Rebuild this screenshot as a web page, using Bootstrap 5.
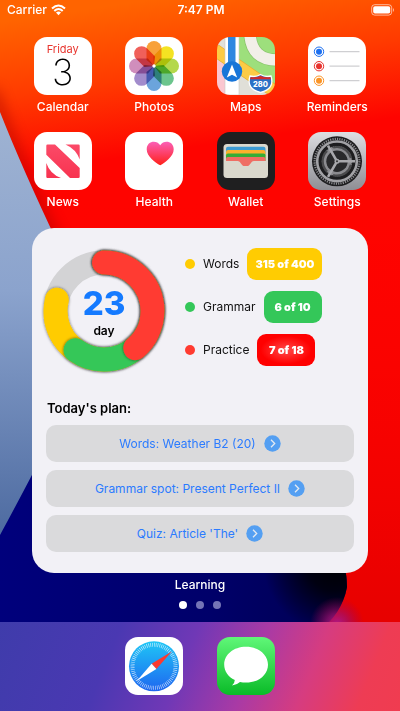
<!DOCTYPE html>
<html lang="en">
<head>
<meta charset="utf-8">
<meta name="viewport" content="width=device-width, initial-scale=1">
<title>Home screen</title>
<link href="https://cdn.jsdelivr.net/npm/bootstrap@5.3.0/dist/css/bootstrap.min.css" rel="stylesheet">
<style>
body{font-family:Inter,"Liberation Sans",sans-serif;background:#f00;color:#111}
.screen{min-height:100vh;isolation:isolate}
.wallpaper{inset:0;z-index:-1}
.status{height:20px;padding:0 5px 0 7px;font-size:12px;line-height:20px;font-weight:500}
.side{flex:1}
.apps{padding:17px 17px 0;row-gap:17px}
.app{gap:4px;color:#fff;font-size:12px;line-height:16px;font-weight:500}
.app:hover{color:#fff}
.tile{width:58px;height:58px;border-radius:13px;overflow:hidden}
.weekday{color:#e8352e;font-size:11px;line-height:14px;padding-top:5px;font-weight:400}
.daynum{font-size:36px;line-height:32px;font-weight:200;color:#000}
.petals path{mix-blend-mode:multiply}
.widget{margin:18px 32px 0;padding:18px 14px 21px;border-radius:22px;background:#f2f1f6}
.ring{width:132px;height:132px;margin:-1px 0 0 -8px}
.ring svg{overflow:visible}
.ring-text{inset:0}
.count{font-size:33px;line-height:39px;font-weight:800;color:#147aff}
.unit{font-size:12px;line-height:15px;font-weight:600;color:#000}
.legend{padding:2px 0 0 15px;gap:11px;font-size:12px}
.legend-row{gap:8px}
.dot{width:10px;height:10px;border-radius:50%}
.pill{min-width:58px;height:32px;line-height:32px;border-radius:9px;padding:0 8px;font-size:11px;font-weight:900;color:#fff}
.yellow{background:#ffcc02}.green{background:#34c759}.coral{background:#ff3b30}
.hot{background:radial-gradient(ellipse at center,#ff4a4a 0,#f00 62%)}
.plan-title{font-size:13px;line-height:18px;font-weight:600;color:#000;margin:22px 0 8px 1px}
.plan{gap:8px}
.plan-btn{--bs-btn-padding-y:0;height:37px;border:0;border-radius:10px;background:#dadadc;color:#2b7bff;font-size:12px;line-height:37px;font-weight:400;gap:8px}
.caption-line{font-size:12px;line-height:16px;font-weight:500;color:#fff;margin-top:4px}
.pager{gap:9px;margin-top:8px}
.page-dot{width:8px;height:8px;border:0;padding:0;border-radius:50%;background:#7474b6}
.page-dot.current{background:#fff}
.dock{min-height:89px;padding:15px 17px 0;background:linear-gradient(112deg,#3f3cab 0,#4a38b2 28%,#7038b6 46%,#a93aa5 62%,#d63c80 76%,#ee3c54 90%,#f03c50 100%)}
</style>
<script src="https://cdn.jsdelivr.net/npm/bootstrap@5.3.0/dist/js/bootstrap.bundle.min.js"></script>
</head>
<body>
<div class="screen d-flex flex-column position-relative">
<svg class="wallpaper position-absolute w-100 h-100" viewBox="0 0 400 711" preserveAspectRatio="none" aria-hidden="true">
<defs>
<linearGradient id="sun" gradientUnits="userSpaceOnUse" x1="150" y1="0" x2="172" y2="150"><stop offset="0" stop-color="#ff6400"/><stop offset=".5" stop-color="#ff3a00"/><stop offset="1" stop-color="#fe0400"/></linearGradient>
<linearGradient id="side" x1="0" y1="0" x2="0" y2="1"><stop offset=".25" stop-color="#f00" stop-opacity="0"/><stop offset="1" stop-color="#dc0000"/></linearGradient>
<linearGradient id="steel" x1="0" y1="0" x2="0" y2="1"><stop offset="0" stop-color="#9fb3d2"/><stop offset=".4" stop-color="#8ba3cd"/><stop offset="1" stop-color="#47659c"/></linearGradient>
<linearGradient id="navy" x1="0" y1="0" x2="1" y2="0"><stop offset="0" stop-color="#00007c"/><stop offset=".6" stop-color="#00006a"/><stop offset="1" stop-color="#000050"/></linearGradient>
<radialGradient id="ink" gradientUnits="userSpaceOnUse" cx="335" cy="562" r="72"><stop offset="0" stop-color="#000"/><stop offset=".4" stop-color="#000" stop-opacity=".8"/><stop offset="1" stop-color="#000" stop-opacity="0"/></radialGradient>
<radialGradient id="glow" gradientUnits="userSpaceOnUse" cx="337" cy="624" r="27"><stop offset="0" stop-color="#b01888"/><stop offset=".4" stop-color="#a01070" stop-opacity=".7"/><stop offset="1" stop-color="#a00050" stop-opacity="0"/></radialGradient>
<filter id="soft" x="-50%" y="-20%" width="200%" height="140%"><feGaussianBlur stdDeviation="7"/></filter>
</defs>
<rect width="400" height="711" fill="url(#sun)"/><rect width="400" height="711" fill="url(#side)"/>
<path d="M-8 90Q18 164 62 254" fill="none" stroke="#a00000" stroke-width="9" opacity=".6" filter="url(#soft)"/>
<path d="M0 112Q22 168 60 248V560H0Z" fill="url(#steel)"/>
<path d="M0 535Q18 502 45 450H300Q347 545 347 587Q342 614 318 632H0Z" fill="url(#navy)"/>
<path d="M250 540H335Q347 565 347 587Q342 614 318 632H250Z" fill="url(#ink)"/>
<rect x="290" y="580" width="110" height="50" fill="url(#glow)"/>
</svg>

<header class="status d-flex align-items-center text-white">
<div class="side d-flex align-items-center gap-1"><span>Carrier</span>
<svg width="15" height="12" viewBox="0 0 15 12" aria-label="Wi-Fi"><g fill="none" stroke="#fff" stroke-width="2"><path d="M1 4.500Q7.500-1.500 14 4.500"/><path d="M3.300 7Q7.500 3 11.700 7"/></g><path d="M5 8.600Q7.500 6.600 10 8.600L7.500 11.200Z" fill="#fff"/></svg></div>
<time class="fw-semibold">7:47 PM</time>
<div class="side text-end lh-1"><svg width="24" height="12" viewBox="0 0 24 12" aria-label="Battery"><rect x=".7" y=".7" width="20" height="10.400" rx="3" fill="none" stroke="#fff" stroke-opacity=".6"/><rect x="2.200" y="2.200" width="17" height="7.400" rx="1.800" fill="#fff"/><path d="M22 4q2 2 0 4z" fill="#fff" opacity=".6"/></svg></div>
</header>

<nav class="apps row row-cols-4 g-0" aria-label="Apps">
<a href="#" class="app col d-flex flex-column align-items-center text-decoration-none">
<span class="tile bg-white d-flex flex-column align-items-center"><span class="weekday">Friday</span><span class="daynum">3</span></span><span>Calendar</span></a>

<a href="#" class="app col d-flex flex-column align-items-center text-decoration-none">
<svg class="tile bg-white" viewBox="0 0 58 58" aria-hidden="true">
<g class="petals">
<path d="M29 29L21.500 23V11.500a7.500 7.500 0 0 1 15 0V23Z" fill="#f8a13a"/>
<path d="M29 29L21.500 23V11.500a7.500 7.500 0 0 1 15 0V23Z" fill="#f4e322" transform="rotate(45 29 29)"/>
<path d="M29 29L21.500 23V11.500a7.500 7.500 0 0 1 15 0V23Z" fill="#b4d84c" transform="rotate(90 29 29)"/>
<path d="M29 29L21.500 23V11.500a7.500 7.500 0 0 1 15 0V23Z" fill="#6cc58d" transform="rotate(135 29 29)"/>
<path d="M29 29L21.500 23V11.500a7.500 7.500 0 0 1 15 0V23Z" fill="#6ba4dc" transform="rotate(180 29 29)"/>
<path d="M29 29L21.500 23V11.500a7.500 7.500 0 0 1 15 0V23Z" fill="#a28ccc" transform="rotate(225 29 29)"/>
<path d="M29 29L21.500 23V11.500a7.500 7.500 0 0 1 15 0V23Z" fill="#d08ebc" transform="rotate(270 29 29)"/>
<path d="M29 29L21.500 23V11.500a7.500 7.500 0 0 1 15 0V23Z" fill="#f0605a" transform="rotate(315 29 29)"/></g>
<circle cx="29" cy="29" r="1.700" fill="#fff"/></svg><span>Photos</span></a>

<a href="#" class="app col d-flex flex-column align-items-center text-decoration-none">
<svg class="tile" viewBox="0 0 58 58" aria-hidden="true"><rect width="58" height="58" fill="#e0dfd8"/>
<path d="M21 0H58V50L21 24Z" fill="#9ddf7c"/>
<path d="M33-2Q35 23 60 23" fill="none" stroke="#8ac56c" stroke-width="13"/><path d="M33-2Q35 23 60 23" fill="none" stroke="#f2efe8" stroke-width="11.500"/>
<path d="M0 23L9 28V58H0Z" fill="#fbc7d0"/>
<path d="M-2 13L60 56" stroke="#e8ab2c" stroke-width="13"/><path d="M-2 13L60 56" stroke="#fdcb45" stroke-width="11.500"/>
<rect x="8" width="14" height="58" fill="#fff" stroke="#c9c8c2" stroke-width=".6"/><rect x="11" width="7.500" height="34" fill="#2e86e0"/>
<circle cx="15" cy="34.500" r="10.200" fill="#1775d8"/><path d="M15 27.500L20.200 40.500L15 37.800L9.800 40.500Z" fill="#fff"/>
<path d="M33 39Q38.500 40.500 43.500 37.500Q48.500 40.500 54 39Q58 52 43.500 55.500Q29 52 33 39Z" fill="#2b70c6" stroke="#fff" stroke-width="1.300"/>
<path d="M33.800 40Q39 41 43.500 38.700Q48 41 53.200 40L54 42.300H33Z" fill="#d22b2b"/>
<text x="43.500" y="50" text-anchor="middle" font-family="Inter,sans-serif" font-size="7.500" font-weight="800" fill="#fff">280</text></svg><span>Maps</span></a>

<a href="#" class="app col d-flex flex-column align-items-center text-decoration-none">
<svg class="tile bg-white" viewBox="0 0 58 58" aria-hidden="true"><path d="M21.500 14.700H51.500M21.500 29.200H51.500M21.500 43.700H51.500" stroke="#cfcfd2" stroke-width="1.200"/>
<g stroke-width="1" fill="none"><circle cx="11" cy="14.700" r="4.700" stroke="#1b6ff0"/><circle cx="11" cy="29.200" r="4.700" stroke="#e8332e"/><circle cx="11" cy="43.700" r="4.700" stroke="#fb9426"/></g>
<circle cx="11" cy="14.700" r="3" fill="#1b6ff0"/><circle cx="11" cy="29.200" r="3" fill="#e8332e"/><circle cx="11" cy="43.700" r="3" fill="#fb9426"/></svg><span>Reminders</span></a>

<a href="#" class="app col d-flex flex-column align-items-center text-decoration-none">
<svg class="tile bg-white" viewBox="0 0 58 58" aria-hidden="true"><defs><linearGradient id="news" x1="0" y1="0" x2="0" y2="1"><stop offset="0" stop-color="#fb4a68"/><stop offset="1" stop-color="#f83350"/></linearGradient></defs>
<path d="M13.500 12.500H21L45.700 36V44.700Q45.700 46 44.400 46H36L12.300 22.700V13.700Q12.300 12.500 13.500 12.500ZM31.500 12.500H44.500Q45.700 12.500 45.700 13.700V27.500Q42 17 31.500 12.500ZM12.300 31Q16 42 27 46H13.500Q12.300 46 12.300 44.800Z" fill="url(#news)"/></svg><span>News</span></a>

<a href="#" class="app col d-flex flex-column align-items-center text-decoration-none">
<svg class="tile bg-white" viewBox="0 0 58 58" aria-hidden="true"><defs><linearGradient id="heart" x1="0" y1="0" x2="0" y2="1"><stop offset="0" stop-color="#fb5fb6"/><stop offset="1" stop-color="#ff2018"/></linearGradient></defs>
<path d="M35.200 33.300C30.500 30.500 21.700 24.500 21.700 17.200C21.700 9 31.500 7.500 35.200 13.200C38.900 7.500 48.700 9 48.700 17.200C48.700 24.500 39.900 30.500 35.200 33.300Z" fill="url(#heart)"/></svg><span>Health</span></a>

<a href="#" class="app col d-flex flex-column align-items-center text-decoration-none">
<svg class="tile" viewBox="0 0 58 58" aria-hidden="true"><rect width="58" height="58" fill="#1f1f20"/><rect x="6.500" y="12" width="44.500" height="34" rx="3.500" fill="#dad8cd"/>
<rect x="9" y="14.700" width="39.500" height="10" rx="2" fill="#3d9bd3"/><rect x="9" y="18" width="39.500" height="9" rx="2" fill="#fbb12c"/><rect x="9" y="21.500" width="39.500" height="9" rx="2" fill="#35ad36"/><rect x="9" y="25" width="39.500" height="9" rx="2" fill="#ef6e64"/>
<path d="M8.500 29H20.500C24 29 24 34.500 28.800 34.500C33.600 34.500 33.600 29 37 29H49V42.500Q49 44 47.500 44H10Q8.500 44 8.500 42.500Z" fill="#dad8cd"/></svg><span>Wallet</span></a>

<a href="#" class="app col d-flex flex-column align-items-center text-decoration-none">
<svg class="tile" viewBox="0 0 58 58" aria-hidden="true"><defs><linearGradient id="metal" x1="0" y1="0" x2="0" y2="1"><stop offset="0" stop-color="#dedee2"/><stop offset="1" stop-color="#8e8e94"/></linearGradient></defs><rect width="58" height="58" fill="url(#metal)"/>
<circle cx="29" cy="29.300" r="25" fill="#1d1d1f"/>
<circle cx="29" cy="29.300" r="22.400" fill="none" stroke="#8c8c90" stroke-width="2.200" pathLength="120" stroke-dasharray="1 1"/>
<circle cx="29" cy="29.300" r="19.800" fill="none" stroke="#a2a2a6" stroke-width="2.600"/>
<circle cx="29" cy="29.300" r="15.200" fill="#8b8b8f" stroke="#262628" stroke-width="1.200" stroke-dasharray="1 1"/>
<circle cx="29" cy="29.300" r="14.300" fill="none" stroke="#4a4a4c" stroke-width="2.200" pathLength="360" stroke-dasharray="92 28" stroke-dashoffset="-14"/>
<circle cx="29" cy="29.300" r="10.700" fill="#29292b"/>
<path d="M29 29.300H47M29 29.300L20 13.700M29 29.300L20 44.900" stroke="#a8a8ac" stroke-width="2.600"/>
<circle cx="29" cy="29.300" r="2.500" fill="#a8a8ac"/><circle cx="29" cy="29.300" r="1" fill="#333"/></svg><span>Settings</span></a>
</nav>

<main class="widget">
<section class="d-flex align-items-start">
<div class="ring position-relative flex-shrink-0">
<svg class="w-100 h-100" viewBox="0 0 132 132" aria-hidden="true"><defs><filter id="shade" filterUnits="userSpaceOnUse" x="-10" y="-10" width="152" height="152"><feDropShadow dx="0" dy="0" stdDeviation="1.600" flood-color="#000" flood-opacity=".6"/></filter></defs>
<g transform="rotate(-90 66 66)" fill="none" stroke-width="24" stroke-linecap="round"><circle cx="66" cy="66" r="48.500" stroke="#d3d3d5"/>
<circle cx="66" cy="66" r="48.500" stroke="#ffcc02" pathLength="360" stroke-dasharray="283.500 400" filter="url(#shade)"/>
<circle cx="66" cy="66" r="48.500" stroke="#34c759" pathLength="360" stroke-dasharray="216 400" filter="url(#shade)"/>
<circle cx="66" cy="66" r="48.500" stroke="#ff3b30" pathLength="360" stroke-dasharray="140 400" filter="url(#shade)"/></g></svg>
<div class="ring-text position-absolute d-flex flex-column align-items-center justify-content-center"><span class="count">23</span><span class="unit">day</span></div>
</div>
<div class="legend d-flex flex-column">
<div class="legend-row d-flex align-items-center"><span class="dot yellow"></span><span>Words</span><span class="pill yellow text-center">315 of 400</span></div>
<div class="legend-row d-flex align-items-center"><span class="dot green"></span><span>Grammar</span><span class="pill green text-center">6 of 10</span></div>
<div class="legend-row d-flex align-items-center"><span class="dot coral"></span><span>Practice</span><span class="pill hot text-center">7 of 18</span></div>
</div>
</section>
<h2 class="plan-title">Today's plan:</h2>
<div class="plan d-grid">
<button type="button" class="plan-btn btn d-flex align-items-center justify-content-center"><span>Words: Weather B2 (20)</span><svg width="17" height="17" viewBox="0 0 17 17" aria-hidden="true"><circle cx="8.500" cy="8.500" r="8.200" fill="#549ff2"/><path d="M7 4.800L10.700 8.500L7 12.200" fill="none" stroke="#e4eaf2" stroke-width="1.300"/></svg></button>
<button type="button" class="plan-btn btn d-flex align-items-center justify-content-center"><span>Grammar spot: Present Perfect II</span><svg width="17" height="17" viewBox="0 0 17 17" aria-hidden="true"><circle cx="8.500" cy="8.500" r="8.200" fill="#549ff2"/><path d="M7 4.800L10.700 8.500L7 12.200" fill="none" stroke="#e4eaf2" stroke-width="1.300"/></svg></button>
<button type="button" class="plan-btn btn d-flex align-items-center justify-content-center"><span>Quiz: Article 'The'</span><svg width="17" height="17" viewBox="0 0 17 17" aria-hidden="true"><circle cx="8.500" cy="8.500" r="8.200" fill="#549ff2"/><path d="M7 4.800L10.700 8.500L7 12.200" fill="none" stroke="#e4eaf2" stroke-width="1.300"/></svg></button>
</div>
</main>
<div class="caption-line text-center">Learning</div>
<div class="pager d-flex justify-content-center"><button type="button" class="page-dot current" aria-label="Page 1"></button><button type="button" class="page-dot" aria-label="Page 2"></button><button type="button" class="page-dot" aria-label="Page 3"></button></div>

<footer class="dock mt-auto"><div class="row g-0 justify-content-center">
<a href="#" class="app col-3 d-flex justify-content-center" aria-label="Safari"><svg class="tile bg-white" viewBox="0 0 58 58" aria-hidden="true"><defs><linearGradient id="sky" x1="0" y1="0" x2="0" y2="1"><stop offset="0" stop-color="#1fc6f6"/><stop offset="1" stop-color="#1e66f0"/></linearGradient></defs><circle cx="29" cy="29.300" r="25" fill="url(#sky)"/><circle cx="29" cy="29.300" r="21.500" fill="none" stroke="#fff" stroke-opacity=".75" stroke-width="4" pathLength="144" stroke-dasharray=".7 1.300"/><path d="M46.800 14.500L31.400 31.900L26.600 26.700Z" fill="#fb3a30"/><path d="M11.800 44L26.600 26.700L31.400 31.900Z" fill="#fff"/></svg></a>
<a href="#" class="app col-3 d-flex justify-content-center" aria-label="Messages"><svg class="tile" viewBox="0 0 58 58" aria-hidden="true"><defs><linearGradient id="msg" x1="0" y1="0" x2="0" y2="1"><stop offset="0" stop-color="#60f778"/><stop offset="1" stop-color="#0abb28"/></linearGradient></defs><rect width="58" height="58" fill="url(#msg)"/><path d="M29 9.800C41.500 9.800 51 17.600 51 27.700S41.500 45.600 29 45.600Q25.800 45.600 23 45Q19.500 48.300 15 48.400Q17.700 46.200 17.800 43C11 39.700 7.200 34 7.200 27.700C7.200 17.600 16.500 9.800 29 9.800Z" fill="#fff"/></svg></a>
</div></footer>
</div>
</body>
</html>
